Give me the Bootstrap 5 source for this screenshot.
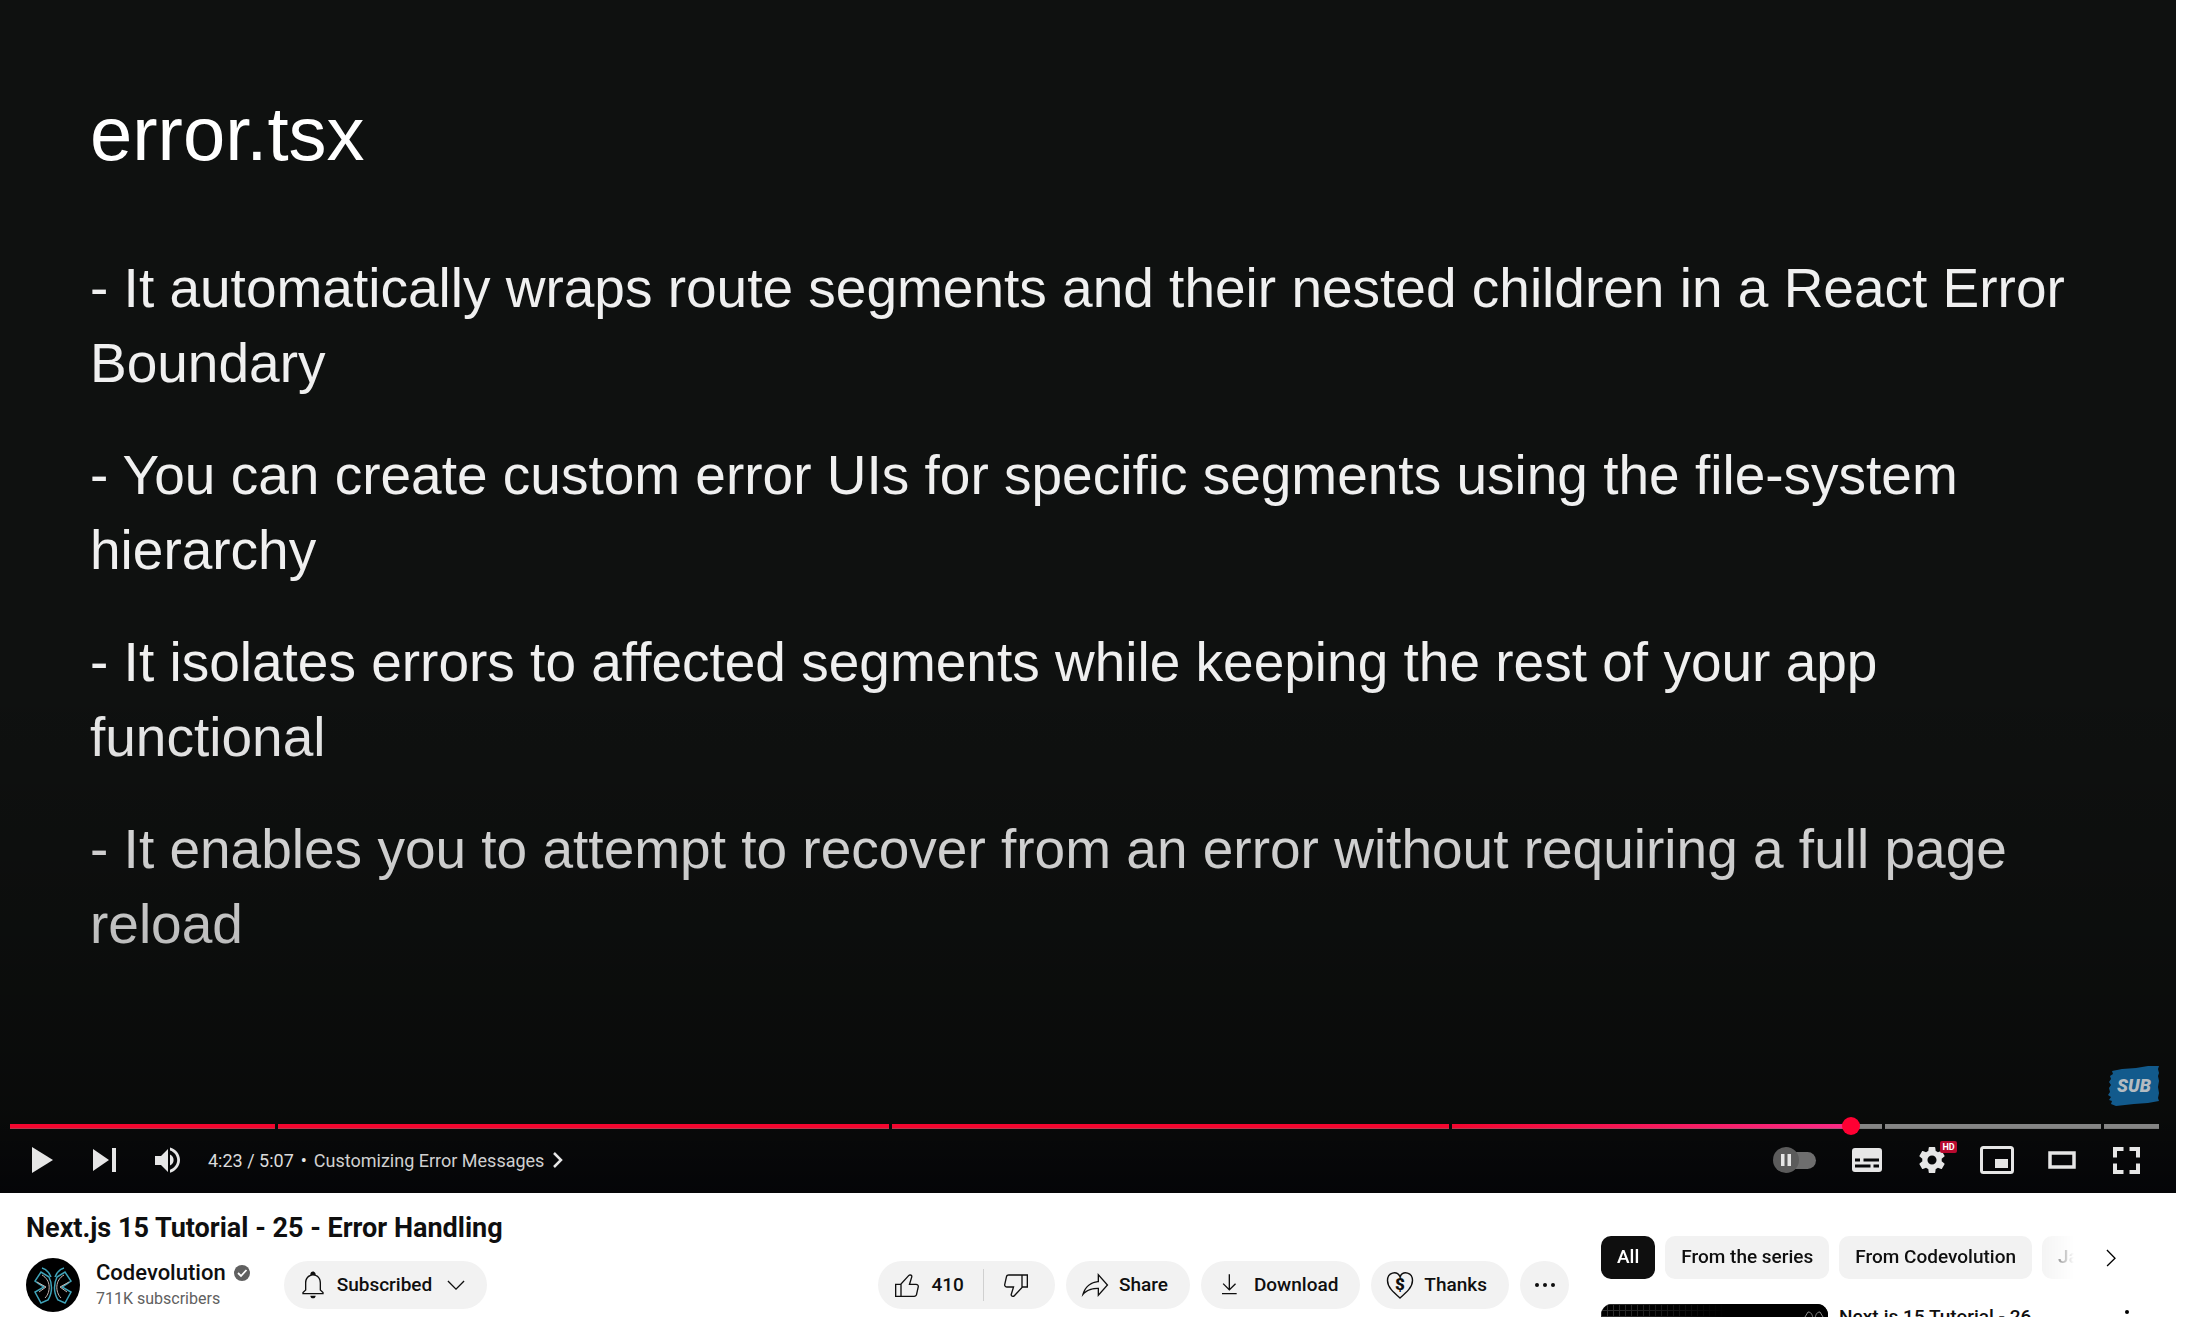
<!DOCTYPE html>
<html lang="en">
<head>
<meta charset="utf-8">
<meta name="viewport" content="width=device-width, initial-scale=1">
<title>Next.js 15 Tutorial - 25 - Error Handling</title>
<link href="https://cdn.jsdelivr.net/npm/bootstrap@5.3.0/dist/css/bootstrap.min.css" rel="stylesheet">
<style>
  body { font-family: Roboto, "Liberation Sans", sans-serif; color: #0f0f0f; background: #fff; }
  svg { display: block; flex: none; }
  button svg { fill: currentColor; }

  /* player */
  .player { margin-right: 16px; background: #0f1110; color: #e6e6e6; }
  .player::before { content: ""; position: absolute; inset: 0; z-index: 1; pointer-events: none;
    background: linear-gradient(to bottom, rgba(0,0,0,0) 56%, rgba(0,0,0,.2) 78%, rgba(0,0,0,.38) 93%, rgba(0,0,4,.7) 100%); }
  .slide { padding: 89px 90px 162px; font-family: "Liberation Sans", Arial, sans-serif; }
  .slide h2 { font-size: 76px; line-height: 90px; margin-bottom: 72px; color: #fff; }
  .slide p { font-size: 55px; line-height: 75px; margin-bottom: 37px; color: #f0f0f0; }
  .slide p:last-child { margin-bottom: 0; }
  .sub-mark { right: 16px; bottom: 86px; z-index: 2; }
  .sub-mark text { font: italic 900 18px Roboto, sans-serif; fill: #b4bcc2; }

  .chrome { z-index: 2; }
  .seek { margin: 0 17px 0 10px; height: 5px; gap: 3px; }
  .seek span { flex-basis: 0; background: #858585; box-shadow: inset 0 -1px rgba(110,110,110,.5); }
  .seek .seen { background: #f4062f; }
  .seek .now { background: linear-gradient(to right, #f4062f, #fb2a86 92%, #858585 92%); }
  .seek input { inset: -7px 0 auto 0; width: 100%; height: 18px; margin: 0; appearance: none; background: transparent; }
  .seek input::-webkit-slider-thumb { appearance: none; width: 18px; height: 18px; border-radius: 50%; background: #ff0033; }
  .bar { padding: 0 17px 2px 10px; font-size: 18px; }
  .ctl { width: 63px; height: 62px; border: 0; padding: 0; background: none; color: #e6e6e6;
    display: flex; align-items: center; justify-content: center; position: relative; }
  .ctl-end { width: 65px; }
  .ctl-auto { width: 78px; }
  .bar .clock { margin-left: 9px; color: #dcdcdc; }
  .bar .bullet { margin: 0 7px; }
  .chapter { color: #d0d0d0; border: 0; background: none; padding: 0; gap: 8px; }
  .hd { left: 41px; top: 12px; width: 17px; height: 12px; border-radius: 2px; background: #b80a2f; color: #fff;
    font-size: 9px; line-height: 12px; font-weight: 700; text-align: center; }

  /* below the player */
  .below { padding: 0 55px 0 26px; gap: 32px; }
  .watch-title { font-size: 27px; line-height: 36px; font-weight: 700; margin: 17px 0 12px; }
  .avatar-pic { border-radius: 50%; margin-right: 16px; }
  .who { margin-right: 34px; }
  .who a { font-size: 22px; line-height: 28px; font-weight: 500; color: #0f0f0f; text-decoration: none; }
  .who small { font-size: 16px; line-height: 24px; color: #606060; display: block; }
  .pill { height: 48px; border: 0; border-radius: 24px; background: #f2f2f2; color: #0f0f0f; font-size: 19px;
    font-weight: 500; display: flex; align-items: center; gap: 8px; padding: 0 22px 0 13px; white-space: nowrap; }
  .pill-bell { padding-right: 15px; }
  .pill-like { border-radius: 24px 0 0 24px; padding-right: 20px; position: relative; }
  .pill-like::after { content: ""; position: absolute; right: 0; top: 8px; height: 32px; width: 1px; background: #d0d0d0; }
  .pill-dislike { border-radius: 0 24px 24px 0; padding: 0 23px 0 16px; }
  .pill-more { width: 49px; padding: 0; justify-content: center; }
  .actions { gap: 11px; }
  .pill text { font: 900 17px Roboto, sans-serif; }

  .rail { flex: 0 0 536px; min-width: 0; padding-top: 43px; }
  .chips { gap: 10px; width: 473px; overflow: hidden; -webkit-mask: linear-gradient(to right, #000 435px, transparent 473px); mask: linear-gradient(to right, #000 435px, transparent 473px); }
  .chip { height: 43px; border: 0; border-radius: 10px; background: #f2f2f2; color: #0f0f0f; font-size: 19px; font-weight: 500; padding: 0 16px; white-space: nowrap; flex: none; }
  .chip-on { background: #0f0f0f; color: #fff; }
  .rail-next { border: 0; background: none; padding: 0; margin-left: 21px; }
  .upnext { margin-top: 25px; }
  .upnext .cover { border-radius: 11px; }
  .upnext h3 { font-size: 19px; line-height: 26px; font-weight: 500; margin: 0 0 0 11px; width: 220px; }
  .upnext button { border: 0; background: none; padding: 0; margin-right: -6px; }
</style>
<script src="https://cdn.jsdelivr.net/npm/bootstrap@5.3.0/dist/js/bootstrap.bundle.min.js"></script>
</head>
<body class="vh-100 overflow-hidden">

<section class="player position-relative">
  <div class="slide">
    <h2 class="fw-normal">error.tsx</h2>
    <p>- It automatically wraps route segments and their nested children in a React Error Boundary</p>
    <p>- You can create custom error UIs for specific segments using the file-system hierarchy</p>
    <p>- It isolates errors to affected segments while keeping the rest of your app functional</p>
    <p>- It enables you to attempt to recover from an error without requiring a full page reload</p>
  </div>

  <svg class="sub-mark position-absolute" width="52" height="42" viewBox="0 0 52 42">
    <path d="M4 6 L14 4 L28 3 L40 1 L51 1 L50 4 L51 8 L50 11 L51 16 L50 22 L51 28 L50 33 L51 36 L40 38 L26 39 L8 41 L3 39 L4 36 L1 35 L3 32 L0 30 L2 27 L1 23 L3 20 L1 17 L3 14 L2 11 L5 9 Z" fill="#125a8c"/>
    <text x="26" y="27" text-anchor="middle">SUB</text>
  </svg>

  <div class="chrome position-relative">
    <div class="seek d-flex position-relative">
      <span class="seen" style="flex-grow:265"></span>
      <span class="seen" style="flex-grow:612"></span>
      <span class="seen" style="flex-grow:557"></span>
      <span class="now" style="flex-grow:431"></span>
      <span style="flex-grow:216"></span>
      <span style="flex-grow:55"></span>
      <input class="position-absolute" type="range" min="0" max="3070" value="2639" aria-label="Seek">
    </div>
    <div class="bar d-flex align-items-center">
      <button class="ctl" aria-label="Play"><svg width="22" height="26" viewBox="0 0 22 26"><path d="M1 0 22 13 1 26Z"/></svg></button>
      <button class="ctl" aria-label="Next"><svg width="24" height="24" viewBox="0 0 24 24"><path d="M0 1 16 12 0 23ZM19 0h4v24h-4Z"/></svg></button>
      <button class="ctl" aria-label="Mute"><svg width="26" height="26" viewBox="0 0 26 26"><path d="M0 9h6l7-7v23l-7-7H0ZM15 7.500c2.400 1 3.600 3.200 3.600 5.600s-1.200 4.500-3.600 5.500ZM15 .5c5.700 1.400 10 6.500 10 12.600S20.700 24.300 15 25.700v-2.900c4.100-1.300 7.200-5.100 7.200-9.700S19.100 4.700 15 3.400Z"/></svg></button>
      <span class="clock">4:23 / 5:07</span>
      <span class="bullet">•</span>
      <button class="chapter d-flex align-items-center"><span>Customizing Error Messages</span>
        <svg width="11" height="18" viewBox="0 0 11 18"><path d="M2 2l7 7-7 7" fill="none" stroke="#e6e6e6" stroke-width="2.500"/></svg></button>

      <div class="d-flex ms-auto">
        <button class="ctl ctl-auto" aria-label="Autoplay"><svg width="44" height="26" viewBox="0 0 44 26"><rect x="10" y="5" width="33" height="17" rx="8.500" fill="#6e6e6e"/><circle cx="13" cy="13" r="13" fill="#5b5b5b"/><path d="M8 7h3.500v12H8ZM14.500 7H18v12h-3.500Z"/></svg></button>
        <button class="ctl ctl-end" aria-label="Subtitles"><svg width="30" height="24" viewBox="0 0 30 24"><path fill-rule="evenodd" d="M3 0h24a3 3 0 0 1 3 3v18a3 3 0 0 1-3 3H3a3 3 0 0 1-3-3V3a3 3 0 0 1 3-3ZM3 10.500v3h5v-3ZM11.500 10.500v3H27v-3ZM3 16.500v3h15.500v-3ZM21.500 16.500v3H27v-3Z"/></svg></button>
        <button class="ctl ctl-end" aria-label="Settings"><svg width="26" height="26" viewBox="10 10 16 16"><path d="m 23.940,18.780 c .03,-0.250 .05,-0.510 .05,-0.780 0,-0.270 -0.020,-0.520 -0.050,-0.780 l 1.680,-1.320 c .15,-0.120 .19,-0.330 .09,-0.510 l -1.600,-2.760 c -0.090,-0.170 -0.310,-0.240 -0.480,-0.170 l -1.990,.8 c -0.410,-0.320 -0.860,-0.580 -1.350,-0.780 l -0.300,-2.120 c -0.020,-0.190 -0.190,-0.330 -0.390,-0.330 l -3.200,0 c -0.200,0 -0.360,.14 -0.390,.33 l -0.300,2.120 c -0.480,.2 -0.930,.47 -1.350,.78 l -1.990,-0.800 c -0.180,-0.070 -0.390,0 -0.480,.17 l -1.600,2.760 c -0.100,.17 -0.050,.39 .09,.51 l 1.680,1.320 c -0.030,.25 -0.050,.52 -0.050,.78 0,.26 .02,.52 .05,.78 l -1.680,1.320 c -0.150,.12 -0.190,.33 -0.090,.51 l 1.600,2.760 c .09,.17 .31,.24 .48,.17 l 1.990,-0.800 c .41,.32 .86,.58 1.350,.78 l .3,2.120 c .02,.19 .19,.33 .39,.33 l 3.200,0 c .2,0 .36,-0.140 .39,-0.330 l .3,-2.120 c .48,-0.200 .93,-0.470 1.350,-0.780 l 1.990,.8 c .18,.07 .39,0 .48,-0.170 l 1.600,-2.760 c .09,-0.170 .05,-0.390 -0.090,-0.510 l -1.680,-1.320 z m -5.940,2.010 c -1.540,0 -2.800,-1.250 -2.800,-2.800 0,-1.540 1.250,-2.800 2.800,-2.800 1.540,0 2.800,1.250 2.800,2.800 0,1.540 -1.250,2.800 -2.800,2.800 z"/></svg><span class="hd position-absolute">HD</span></button>
        <button class="ctl ctl-end" aria-label="Miniplayer"><svg width="34" height="28" viewBox="0 0 34 28"><rect x="1.500" y="1.500" width="31" height="25" rx="2" fill="none" stroke="currentColor" stroke-width="3"/><path d="M15 13h13v9H15Z"/></svg></button>
        <button class="ctl ctl-end" aria-label="Theater mode"><svg width="28" height="18" viewBox="0 0 28 18"><rect x="2" y="2" width="24" height="14" fill="none" stroke="currentColor" stroke-width="3.500"/></svg></button>
        <button class="ctl ctl-end" aria-label="Full screen"><svg width="27" height="27" viewBox="0 0 27 27"><path d="M2 10.500V2h8.500M16.500 2H25v8.500M25 16.500V25h-8.500M10.500 25H2v-8.500" fill="none" stroke="currentColor" stroke-width="4"/></svg></button>
      </div>
    </div>
  </div>
</section>

<main class="below d-flex">
  <section class="flex-grow-1">
    <h1 class="watch-title">Next.js 15 Tutorial - 25 - Error Handling</h1>
    <div class="d-flex align-items-center">
      <svg class="avatar-pic" width="54" height="54" viewBox="0 0 54 54">
        <rect width="54" height="54" fill="#000"/>
        <g fill="none" stroke="#3fa3b8" stroke-width="1.500">
          <path id="wing" d="M25 19C23 14 20 11 16 10M23 19 15 14 9 23l4 3 5 3-9 5 6 11 7-3c5-8 4-17 1-23Z"/>
          <use href="#wing" transform="matrix(-1 0 0 1 54 0)"/>
        </g>
        <g fill="none" stroke="#c9b9b4" stroke-width="1"><path d="M16 17c9 5 9 17 3 23M11 24l9 5-7 5"/><path d="M38 17c-9 5-9 17-3 23M43 24l-9 5 7 5"/></g>
      </svg>
      <div class="who">
        <div class="d-flex align-items-center gap-2"><a href="#">Codevolution</a>
          <svg width="16" height="16" viewBox="0 0 16 16"><circle cx="8" cy="8" r="8" fill="#606060"/><path d="M4 8l3 3 5.500-6" fill="none" stroke="#fff" stroke-width="1.800"/></svg></div>
        <small>711K subscribers</small>
      </div>
      <button class="pill pill-bell">
        <svg width="32" height="32" viewBox="0 0 24 24"><path d="M10,20h4c0,1.100-0.900,2-2,2S10,21.100,10,20z M20,17.350V19H4v-1.650l2-1.880v-5.150c0-2.920,1.560-5.220,4-5.980V3.960 c0-1.420,1.490-2.500,2.990-1.760C13.640,2.520,14,3.230,14,3.960l0,0.390c2.440,0.750,4,3.060,4,5.980v5.150L20,17.350z M19,17.770l-2-1.880v-5.470 c0-2.470-1.190-4.360-3.130-5.100c-1.260-0.530-2.640-0.500-3.840,0.030C8.150,6.110,7,7.990,7,10.420v5.470l-2,1.880V18h14V17.770z"/></svg>
        Subscribed
        <svg width="32" height="32" viewBox="0 0 24 24"><path d="M12 15.700 5.600 9.400l.7-.7 5.700 5.700 5.700-5.700.7.7-6.400 6.300z"/></svg>
      </button>

      <div class="actions d-flex ms-auto">
        <div class="d-flex">
          <button class="pill pill-like"><svg width="32" height="32" viewBox="0 0 24 24"><path d="M18.770,11h-4.230l1.520-4.940C16.380,5.030,15.540,4,14.380,4c-0.580,0-1.140,0.240-1.520,0.650L7,11H3v10h4h1h9.430 c1.060,0,1.980-0.670,2.190-1.610l1.340-6C21.230,12.150,20.180,11,18.770,11z M7,20H4v-8h3V20z M19.980,13.170l-1.340,6 C18.540,19.650,18.030,20,17.430,20H8v-8.610l5.600-6.060C13.790,5.120,14.080,5,14.380,5c0.260,0,0.500,0.110,0.630,0.300 c0.070,0.100,0.150,0.260,0.090,0.470l-1.520,4.940L13.180,12h1.350h4.230c0.410,0,0.800,0.170,1.030,0.460C19.920,12.610,20.050,12.860,19.980,13.170z"/></svg>410</button>
          <button class="pill pill-dislike" aria-label="Dislike"><svg width="32" height="32" viewBox="0 0 24 24"><path d="M17,4h-1H6.570C5.500,4,4.590,4.670,4.380,5.610l-1.340,6C2.770,12.850,3.820,14,5.230,14h4.230l-1.520,4.940C7.620,19.970,8.460,21,9.620,21 c0.580,0,1.140-0.240,1.520-0.650L17,14h4V4H17z M10.400,19.670C10.210,19.880,9.920,20,9.620,20c-0.260,0-0.500-0.110-0.630-0.300 c-0.070-0.100-0.150-0.260-0.090-0.470l1.520-4.940l0.400-1.290H9.460H5.230c-0.410,0-0.800-0.170-1.030-0.460c-0.120-0.150-0.250-0.400-0.180-0.720l1.340-6 C5.460,5.350,5.970,5,6.570,5H16v8.610L10.400,19.670z M20,13h-3V5h3V13z"/></svg></button>
        </div>
        <button class="pill"><svg width="32" height="32" viewBox="0 0 24 24"><path d="M15,5.630L20.660,12L15,18.370V15v-1h-1c-3.960,0-7.140,1-9.750,3.090c1.840-4.070,5.110-6.400,9.890-7.100L15,9.860V9V5.630 M14,3v6 C6.220,10.130,3.110,15.330,2,21c2.780-3.970,6.440-6,12-6v6l8-9L14,3L14,3z"/></svg>Share</button>
        <button class="pill"><svg width="32" height="32" viewBox="0 0 24 24"><path d="M17 18v1H6v-1h11zm-.5-6.600-.7-.7-3.800 3.700V4h-1v10.400l-3.800-3.800-.7.7 5 5 5-4.900z"/></svg>Download</button>
        <button class="pill"><svg width="32" height="32" viewBox="0 0 32 32"><path d="M16 29C9 23 3.500 18 3.500 11.500 3.500 3.500 12.500 1 16 7.500c3.500-6.500 12.500-4 12.500 4C28.500 18 23 23 16 29Z" fill="none" stroke="#0f0f0f" stroke-width="1.400"/><text x="16" y="21" text-anchor="middle">$</text></svg>Thanks</button>
        <button class="pill pill-more" aria-label="More actions"><svg width="20" height="4" viewBox="0 0 20 4"><circle cx="2" cy="2" r="2"/><circle cx="10" cy="2" r="2"/><circle cx="18" cy="2" r="2"/></svg></button>
      </div>
    </div>
  </section>

  <aside class="rail">
    <div class="d-flex align-items-center">
      <div class="chips d-flex">
        <button class="chip chip-on">All</button>
        <button class="chip">From the series</button>
        <button class="chip">From Codevolution</button>
        <button class="chip">JavaScript</button>
      </div>
      <button class="rail-next" aria-label="Next"><svg width="32" height="32" viewBox="0 0 24 24"><path d="m9.400 18.400-.7-.7 5.600-5.600-5.700-5.700.7-.7 6.400 6.400-6.300 6.300z"/></svg></button>
    </div>
    <article class="upnext d-flex align-items-start">
      <svg class="cover" width="227" height="128" viewBox="0 0 227 128">
        <defs>
          <pattern id="mesh" width="6" height="6" patternUnits="userSpaceOnUse"><path d="M0 .5H6M.5 0V6" stroke="#333" fill="none"/></pattern>
          <linearGradient id="dim"><stop offset="0" stop-opacity="0"/><stop offset=".55" stop-opacity="1"/></linearGradient>
        </defs>
        <rect width="227" height="128"/><rect width="130" height="128" fill="url(#mesh)"/><rect width="227" height="128" fill="url(#dim)"/>
        <path d="M212 14c-1-4-2-6-5-6l-3 5 3 4M214 14c1-4 2-6 5-6l3 5-3 4" fill="none" stroke="#8a8a8a"/>
      </svg>
      <h3>Next.js 15 Tutorial - 26</h3>
      <button class="ms-auto" aria-label="Menu"><svg width="32" height="32" viewBox="0 0 32 32"><circle cx="16" cy="8" r="2"/><circle cx="16" cy="16" r="2"/><circle cx="16" cy="24" r="2"/></svg></button>
    </article>
  </aside>
</main>
</body>
</html>
